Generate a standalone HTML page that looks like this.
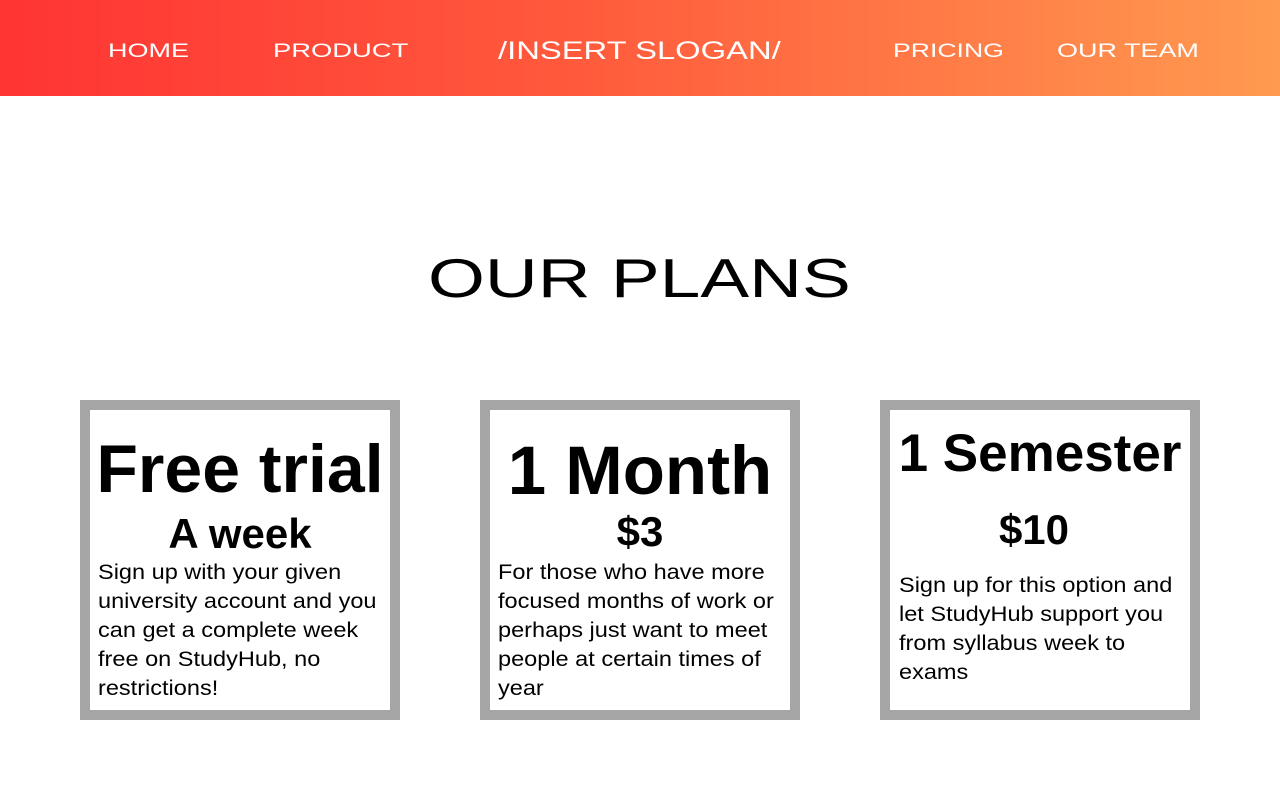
<!DOCTYPE html>
<html><head><style>
body{margin:0;width:1280px;height:800px;background:#fff;position:relative;overflow:hidden;font-family:"Liberation Sans",sans-serif;}
.hdr{position:absolute;left:0;top:0;width:1280px;height:96px;background:linear-gradient(90deg,#ff3434,#ff5a3c 45%,#ff9a50);}
.n{position:absolute;color:#fff;white-space:nowrap;font-size:19px;line-height:20px;top:42px;transform-origin:0 0;}
.card{position:absolute;top:400px;width:300px;height:300px;border:10px solid #a6a6a6;background:#fff;}
.t{position:absolute;left:0;width:300px;text-align:center;font-weight:bold;white-space:nowrap;color:#000;}
.b{position:absolute;left:8px;font-size:21px;line-height:29px;white-space:nowrap;color:#000;transform:scaleX(1.12);transform-origin:0 0;}
</style></head><body>
<div class="hdr">
<span class="n" style="left:108px;transform:scaleX(1.42)">HOME</span>
<span class="n" style="left:273px;transform:scaleX(1.44)">PRODUCT</span>
<span class="n" style="left:498px;top:38px;font-size:25px;line-height:26px;transform:scaleX(1.31)">/INSERT SLOGAN/</span>
<span class="n" style="left:893px;transform:scaleX(1.4)">PRICING</span>
<span class="n" style="left:1057px;transform:scaleX(1.42)">OUR TEAM</span>
</div>
<div style="position:absolute;left:428px;top:250px;font-size:55px;line-height:56px;white-space:nowrap;transform:scaleX(1.33);transform-origin:0 0">OUR PLANS</div>

<div class="card" style="left:80px">
<div class="t" style="top:24px;font-size:68px;line-height:70px">Free trial</div>
<div class="t" style="top:102px;font-size:42px;line-height:44px">A week</div>
<div class="b" style="top:148px">Sign up with your given<br>university account and you<br>can get a complete week<br>free on StudyHub, no<br>restrictions!</div>
</div>
<div class="card" style="left:480px">
<div class="t" style="top:26px;font-size:69px;line-height:70px">1 Month</div>
<div class="t" style="top:100px;font-size:42px;line-height:44px">$3</div>
<div class="b" style="top:148px">For those who have more<br>focused months of work or<br>perhaps just want to meet<br>people at certain times of<br>year</div>
</div>
<div class="card" style="left:880px">
<div class="t" style="top:16px;font-size:53px;line-height:56px">1 Semester</div>
<div class="t" style="top:98px;font-size:42px;line-height:44px;left:-6px">$10</div>
<div class="b" style="top:161px;left:9px">Sign up for this option and<br>let StudyHub support you<br>from syllabus week to<br>exams</div>
</div>
</body></html>
